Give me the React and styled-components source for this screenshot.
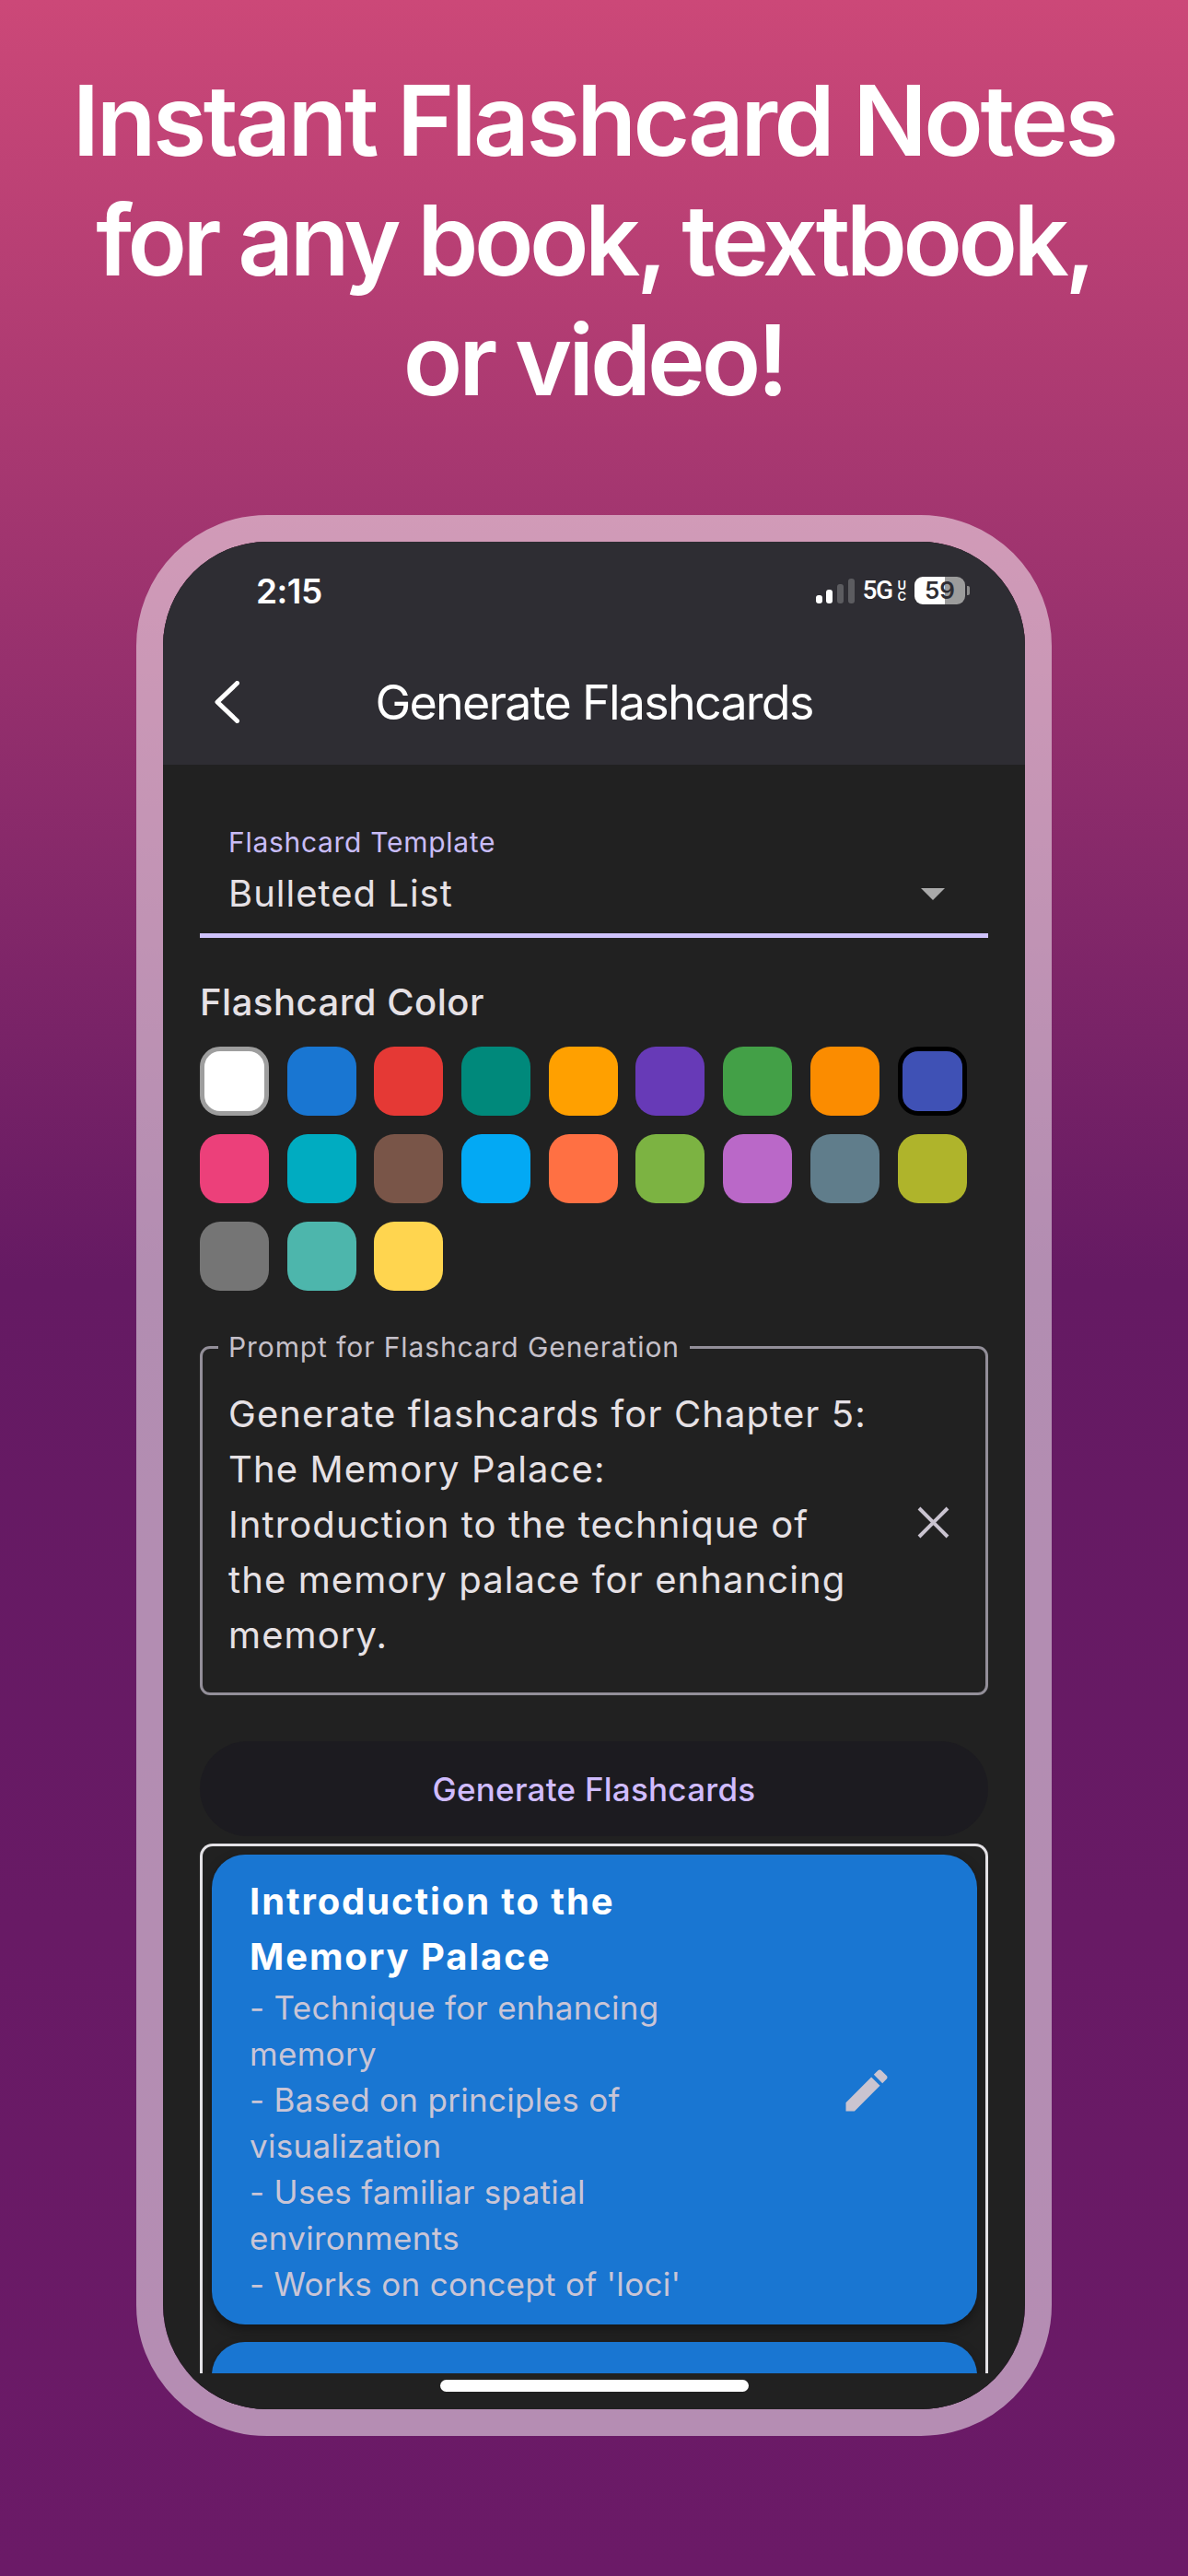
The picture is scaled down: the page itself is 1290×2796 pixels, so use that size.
import React from "react";
import styled, { createGlobalStyle } from "styled-components";

const Global = createGlobalStyle`
  html, body { margin: 0; padding: 0; background: #6a1a66; }
  * { box-sizing: border-box; }
`;

const Page = styled.div`
  width: 1290px;
  height: 2796px;
  overflow: hidden;
  display: flex;
  flex-direction: column;
  align-items: center;
  padding-top: 66px;
  background: linear-gradient(180deg, #cc4878 0, #651a63 1390px, #6b1a67 100%);
  font-family: Inter, "Noto Sans", sans-serif;
`;

const Headline = styled.h1`
  margin: 0;
  font-size: 106px;
  line-height: 130px;
  font-weight: 600;
  color: #fff;
  text-align: center;
`;

const HeadlineLine = styled.span`
  display: block;
  white-space: nowrap;
  letter-spacing: ${(p) => p.$tracking}px;
`;

const PhoneFrame = styled.div`
  margin-top: 103px;
  width: 994px;
  height: 2085px;
  flex-shrink: 0;
  border: 29px solid rgba(255, 255, 255, 0.5);
  border-radius: 142px;
  display: flex;
`;

const Screen = styled.div`
  flex: 1;
  min-width: 0;
  border-radius: 113px;
  overflow: hidden;
  background: #212121;
  display: flex;
  flex-direction: column;
`;

const AppBar = styled.header`
  height: 242px;
  flex-shrink: 0;
  background: #2e2d33;
  display: flex;
  flex-direction: column;
`;

const StatusBar = styled.div`
  height: 106px;
  padding: 0 60px 0 101px;
  display: flex;
  align-items: center;
  justify-content: space-between;
  color: #fff;
`;

const Clock = styled.span`
  font-size: 37px;
  font-weight: 600;
  letter-spacing: -0.5px;
`;

const StatusIcons = styled.div`
  display: flex;
  align-items: center;
`;

const Signal = styled.div`
  display: flex;
  align-items: flex-end;
  gap: 4.7px;
  height: 27px;
  margin-right: 9px;
`;

const SignalBar = styled.span`
  width: 7px;
  height: ${(p) => p.$h}px;
  border-radius: 3px;
  background: ${(p) => (p.$off ? "#5c5c60" : "#fff")};
`;

const NetworkLabel = styled.span`
  font-family: Roboto, sans-serif;
  font-size: 28px;
  font-weight: 500;
  letter-spacing: -1.6px;
  line-height: 30px;
`;

const NetworkBadge = styled.span`
  display: flex;
  flex-direction: column;
  margin: 0 9px 0 6px;
  font-size: 13px;
  font-weight: 600;
  line-height: 12px;
`;

const Battery = styled.span`
  width: 55px;
  height: 30px;
  border-radius: 9px;
  background: linear-gradient(90deg, #fff 0, #fff 60%, #9c9c9c 60%, #9c9c9c 100%);
  color: #2e2d33;
  font-size: 26px;
  font-weight: 600;
  line-height: 30px;
  text-align: center;
`;

const BatteryNub = styled.span`
  width: 3px;
  height: 10px;
  margin-left: 2px;
  border-radius: 0 2px 2px 0;
  background: #8b8b8b;
`;

const Toolbar = styled.div`
  height: 136px;
  padding: 0 56px;
  display: grid;
  grid-template-columns: 1fr auto 1fr;
  align-items: center;
`;

const ScreenTitle = styled.h2`
  margin: 0;
  font-size: 52px;
  font-weight: 400;
  letter-spacing: -1.75px;
  color: #fff;
`;

const Content = styled.main`
  flex: 1;
  min-height: 0;
  padding: 0 40px;
  display: flex;
  flex-direction: column;
`;

const SelectField = styled.div`
  margin-top: 64px;
  padding: 0 31px 13px;
  border-bottom: 5px solid #cfc3fb;
  flex-shrink: 0;
`;

const SelectLabel = styled.div`
  font-size: 30px;
  line-height: 40px;
  letter-spacing: 0.7px;
  color: #c8bcf6;
  margin-bottom: 6px;
`;

const SelectRow = styled.div`
  display: flex;
  align-items: center;
  justify-content: space-between;
  padding-right: 16px;
  font-size: 40px;
  line-height: 60px;
  letter-spacing: 1px;
  color: #e6e1e5;
`;

const Caret = styled.span`
  width: 0;
  height: 0;
  border-left: 13px solid transparent;
  border-right: 13px solid transparent;
  border-top: 13px solid #aaa;
`;

const SectionTitle = styled.h3`
  margin: 40px 0 18px;
  flex-shrink: 0;
  font-size: 40px;
  line-height: 60px;
  font-weight: 500;
  letter-spacing: 0.5px;
  color: #e6e1e5;
`;

const SwatchGrid = styled.div`
  display: grid;
  grid-template-columns: repeat(9, 75px);
  column-gap: 19.7px;
  row-gap: 20px;
  flex-shrink: 0;
`;

const Swatch = styled.div`
  height: 75px;
  border-radius: 22px;
  background: ${(p) => p.$color};
  border: ${(p) => (p.$ring ? `5px solid ${p.$ring}` : "none")};
`;

const PromptField = styled.fieldset`
  margin: 46px 0 0;
  padding: 28px 39px 0 28px;
  height: 393px;
  flex-shrink: 0;
  min-width: 0;
  border: 3px solid #938f99;
  border-radius: 11px;
`;

const PromptLegend = styled.legend`
  margin-left: -11px;
  padding: 0 11px;
  font-size: 30px;
  line-height: 30px;
  letter-spacing: 0.9px;
  color: #c5c0c9;
`;

const PromptRow = styled.div`
  display: flex;
  align-items: center;
  justify-content: space-between;
`;

const PromptText = styled.div`
  font-size: 40px;
  line-height: 60px;
  letter-spacing: 1.1px;
  color: #e6e1e5;
  white-space: nowrap;
`;

const ClearIcon = styled.svg`
  width: 35px;
  height: 35px;
  margin-bottom: 6px;
  flex-shrink: 0;
`;

const PrimaryButton = styled.button`
  margin-top: 50px;
  height: 103px;
  flex-shrink: 0;
  border: none;
  border-radius: 52px;
  background: #1c1b20;
  color: #d0bcff;
  font-family: inherit;
  font-size: 35px;
  font-weight: 500;
  letter-spacing: 0.25px;
`;

const CardList = styled.section`
  margin-top: 8px;
  flex: 1;
  min-height: 0;
  overflow: hidden;
  border: 3px solid #e4e2e6;
  border-bottom: none;
  border-radius: 14px 14px 0 0;
  padding: 9px 9px 0 10px;
  display: flex;
  flex-direction: column;
  gap: 19px;
`;

const Card = styled.article`
  flex-shrink: 0;
  min-height: ${(p) => p.$min || 0}px;
  padding: 21px 90px 19px 41px;
  border-radius: 36px;
  background: #1976d2;
  box-shadow: 0 5px 12px rgba(0, 0, 0, 0.35);
  display: flex;
  align-items: center;
  justify-content: space-between;
`;

const CardTitle = styled.div`
  font-size: 40px;
  line-height: 60px;
  font-weight: 700;
  letter-spacing: 1.9px;
  color: #fff;
`;

const CardBody = styled.div`
  font-size: 35px;
  line-height: 50px;
  letter-spacing: 0.3px;
  color: #c9c5d6;
`;

const HomeArea = styled.div`
  height: 39px;
  flex-shrink: 0;
  padding-top: 7px;
  display: flex;
  justify-content: center;
  background: #212121;
`;

const HomeBar = styled.div`
  width: 335px;
  height: 13px;
  border-radius: 7px;
  background: #fff;
`;

const colors = [
  ["#fff", "#9e9e9e"], ["#1976d2"], ["#e53935"], ["#00897b"], ["#ffa000"], ["#673ab7"], ["#43a047"], ["#fb8c00"], ["#3f51b5", "#000"],
  ["#ec407a"], ["#00acc1"], ["#795548"], ["#03a9f4"], ["#ff7043"], ["#7cb342"], ["#ba68c8"], ["#607d8b"], ["#afb42b"],
  ["#757575"], ["#4db6ac"], ["#ffd54f"],
];

export default function App() {
  return (
    <Page>
      <Global />
      <Headline>
        <HeadlineLine $tracking={-3.5}>Instant Flashcard Notes</HeadlineLine>
        <HeadlineLine $tracking={-4.5}>for any book, textbook,</HeadlineLine>
        <HeadlineLine $tracking={-4}>or video!</HeadlineLine>
      </Headline>
      <PhoneFrame>
        <Screen>
          <AppBar>
            <StatusBar>
              <Clock>2:15</Clock>
              <StatusIcons>
                <Signal>
                  <SignalBar $h={9} />
                  <SignalBar $h={15} />
                  <SignalBar $h={21} $off />
                  <SignalBar $h={27} $off />
                </Signal>
                <NetworkLabel>5G</NetworkLabel>
                <NetworkBadge>
                  <span>U</span>
                  <span>C</span>
                </NetworkBadge>
                <Battery>59</Battery>
                <BatteryNub />
              </StatusIcons>
            </StatusBar>
            <Toolbar>
              <svg width="27" height="46" viewBox="0 0 27 46" fill="none">
                <path d="M24.5 2.5 L3 23 L24.5 43.5" stroke="#fff" strokeWidth="5" strokeLinecap="round" strokeLinejoin="round" />
              </svg>
              <ScreenTitle>Generate Flashcards</ScreenTitle>
            </Toolbar>
          </AppBar>
          <Content>
            <SelectField>
              <SelectLabel>Flashcard Template</SelectLabel>
              <SelectRow>
                Bulleted List
                <Caret />
              </SelectRow>
            </SelectField>
            <SectionTitle>Flashcard Color</SectionTitle>
            <SwatchGrid>
              {colors.map(([c, ring], i) => (
                <Swatch key={i} $color={c} $ring={ring} />
              ))}
            </SwatchGrid>
            <PromptField>
              <PromptLegend>Prompt for Flashcard Generation</PromptLegend>
              <PromptRow>
                <PromptText>
                  Generate flashcards for Chapter 5:
                  <br />
                  The Memory Palace:
                  <br />
                  Introduction to the technique of
                  <br />
                  the memory palace for enhancing
                  <br />
                  memory.
                </PromptText>
                <ClearIcon viewBox="0 0 35 35" fill="none">
                  <path d="M2 2 L33 33 M33 2 L2 33" stroke="#cac4d0" strokeWidth="4" />
                </ClearIcon>
              </PromptRow>
            </PromptField>
            <PrimaryButton>Generate Flashcards</PrimaryButton>
            <CardList>
              <Card>
                <div>
                  <CardTitle>
                    Introduction to the
                    <br />
                    Memory Palace
                  </CardTitle>
                  <CardBody>
                    - Technique for enhancing
                    <br />
                    memory
                    <br />
                    - Based on principles of
                    <br />
                    visualization
                    <br />
                    - Uses familiar spatial
                    <br />
                    environments
                    <br />
                    - Works on concept of 'loci'
                  </CardBody>
                </div>
                <svg width="60" height="60" viewBox="0 0 24 24" fill="#cac4d0">
                  <path d="M3 17.25V21h3.75L17.81 9.94l-3.75-3.75L3 17.25zM20.71 7.04c.39-.39.39-1.02 0-1.41l-2.34-2.34c-.39-.39-1.02-.39-1.41 0l-1.83 1.83 3.75 3.75 1.83-1.83z" />
                </svg>
              </Card>
              <Card $min={200} />
            </CardList>
          </Content>
          <HomeArea>
            <HomeBar />
          </HomeArea>
        </Screen>
      </PhoneFrame>
    </Page>
  );
}
